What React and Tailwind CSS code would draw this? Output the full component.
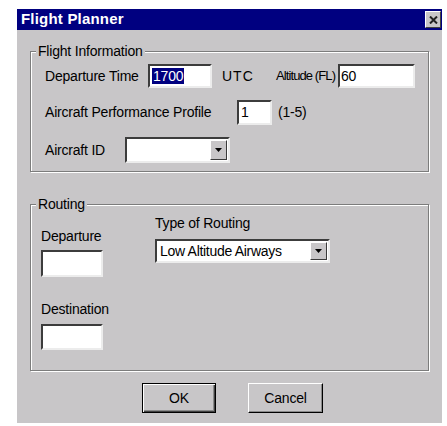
const FONT = { fontFamily: '"Liberation Sans", Arial, sans-serif' }

// sunken white edit field, classic 3D look
const FIELD =
  'bg-white border-2 border-t-[#3c3c3c] border-l-[#3c3c3c] border-b-[#ececec] border-r-[#ececec]'

function DropArrow() {
  return (
    <div className="w-[17px] h-full bg-[#c8c6c8] border border-t-white border-l-white border-b-[#3a3a3a] border-r-[#3a3a3a] flex items-center justify-center">
      <svg width="7" height="4" viewBox="0 0 7 4">
        <path d="M0 0h7L3.5 4z" fill="#000" />
      </svg>
    </div>
  )
}

function Combo({ width, height, value }) {
  return (
    <div className={`${FIELD} flex items-stretch p-[1px]`} style={{ width, height }}>
      <div className="flex-1 flex items-center pl-[2px] text-[14px] tracking-[-0.3px] text-black whitespace-nowrap overflow-hidden">{value}</div>
      <DropArrow />
    </div>
  )
}

function GroupBox({ title, className, children }) {
  return (
    <div className={`relative border border-[#7c7c7c] shadow-[inset_1px_1px_0_#fff,1px_1px_0_#fff] ${className}`}>
      <span className="absolute -top-[9px] left-[5px] px-[2px] bg-[#c8c6c8] text-[14px] leading-[16px] tracking-[-0.2px] text-black">{title}</span>
      {children}
    </div>
  )
}

export default function App() {
  return (
    <div className="w-[447px] h-[426px] bg-white pl-[17px] pt-[9px]" style={FONT}>
      <div className="w-[425px] h-[414px] bg-[#c8c6c8] flex flex-col">
        {/* title bar */}
        <div className="h-[21px] bg-[#000080] flex items-center justify-between pl-[4px] pr-[1px]">
          <span className="text-white font-bold text-[15px] tracking-[0.2px]">Flight Planner</span>
          <div className="w-[16px] h-[17px] bg-[#c8c6c8] border border-t-white border-l-white border-b-[#404040] border-r-[#404040] flex items-center justify-center">
            <svg width="9" height="8" viewBox="0 0 9 8">
              <path d="M1 0.5l7 7M8 0.5l-7 7" stroke="#222" strokeWidth="2" />
            </svg>
          </div>
        </div>

        <div className="px-[13px] pt-[21px] text-[14px] tracking-[-0.2px] text-black">
          <GroupBox title="Flight Information" className="pt-[12px] pl-[14px] pb-[8px]">
            <div className="flex items-center h-[24px]">
              <span className="w-[103px] whitespace-nowrap">Departure Time</span>
              <div className={`${FIELD} w-[64px] h-[24px] flex items-center pl-[2px]`}>
                <span className="bg-[#000080] text-white leading-[16px] px-[1px]">1700</span>
              </div>
              <span className="ml-[10px] w-[54px] tracking-[1px]">UTC</span>
              <span className="w-[62px] whitespace-nowrap text-[13px] tracking-[-0.9px]">Altitude (FL)</span>
              <div className={`${FIELD} w-[77px] h-[24px] flex items-center pl-[1px]`}>60</div>
            </div>
            <div className="flex items-center h-[25px] mt-[12px]">
              <span className="w-[192px] whitespace-nowrap">Aircraft Performance Profile</span>
              <div className={`${FIELD} w-[35px] h-[25px] flex items-center pl-[2px]`}>1</div>
              <span className="ml-[6px]">(1-5)</span>
            </div>
            <div className="flex items-center h-[26px] mt-[12px]">
              <span className="w-[80px] whitespace-nowrap">Aircraft ID</span>
              <Combo width={105} height={26} value="" />
            </div>
          </GroupBox>

          <GroupBox title="Routing" className="mt-[32px] h-[167px] flex">
            <div className="w-[124px] pl-[10px] pt-[23px]">
              <div className="leading-[16px]">Departure</div>
              <div className={`${FIELD} mt-[6px] w-[62px] h-[27px]`} />
              <div className="mt-[24px] leading-[16px]">Destination</div>
              <div className={`${FIELD} mt-[7px] w-[62px] h-[26px]`} />
            </div>
            <div className="pt-[10px]">
              <div className="leading-[16px]">Type of Routing</div>
              <div className="mt-[8px]">
                <Combo width={175} height={24} value="Low Altitude Airways" />
              </div>
            </div>
          </GroupBox>

          <div className="mt-[12px] flex pl-[112px] gap-[32px]">
            <button className="w-[74px] h-[30px] border border-black shadow-[inset_1px_1px_0_#fff,inset_-1px_-1px_0_#404040,inset_-2px_-2px_0_#8a8a8a] bg-[#c8c6c8]">
              OK
            </button>
            <button className="w-[75px] h-[30px] border border-t-white border-l-white border-b-black border-r-black shadow-[inset_-1px_-1px_0_#8a8a8a] bg-[#c8c6c8]">
              Cancel
            </button>
          </div>
        </div>
      </div>
    </div>
  )
}
